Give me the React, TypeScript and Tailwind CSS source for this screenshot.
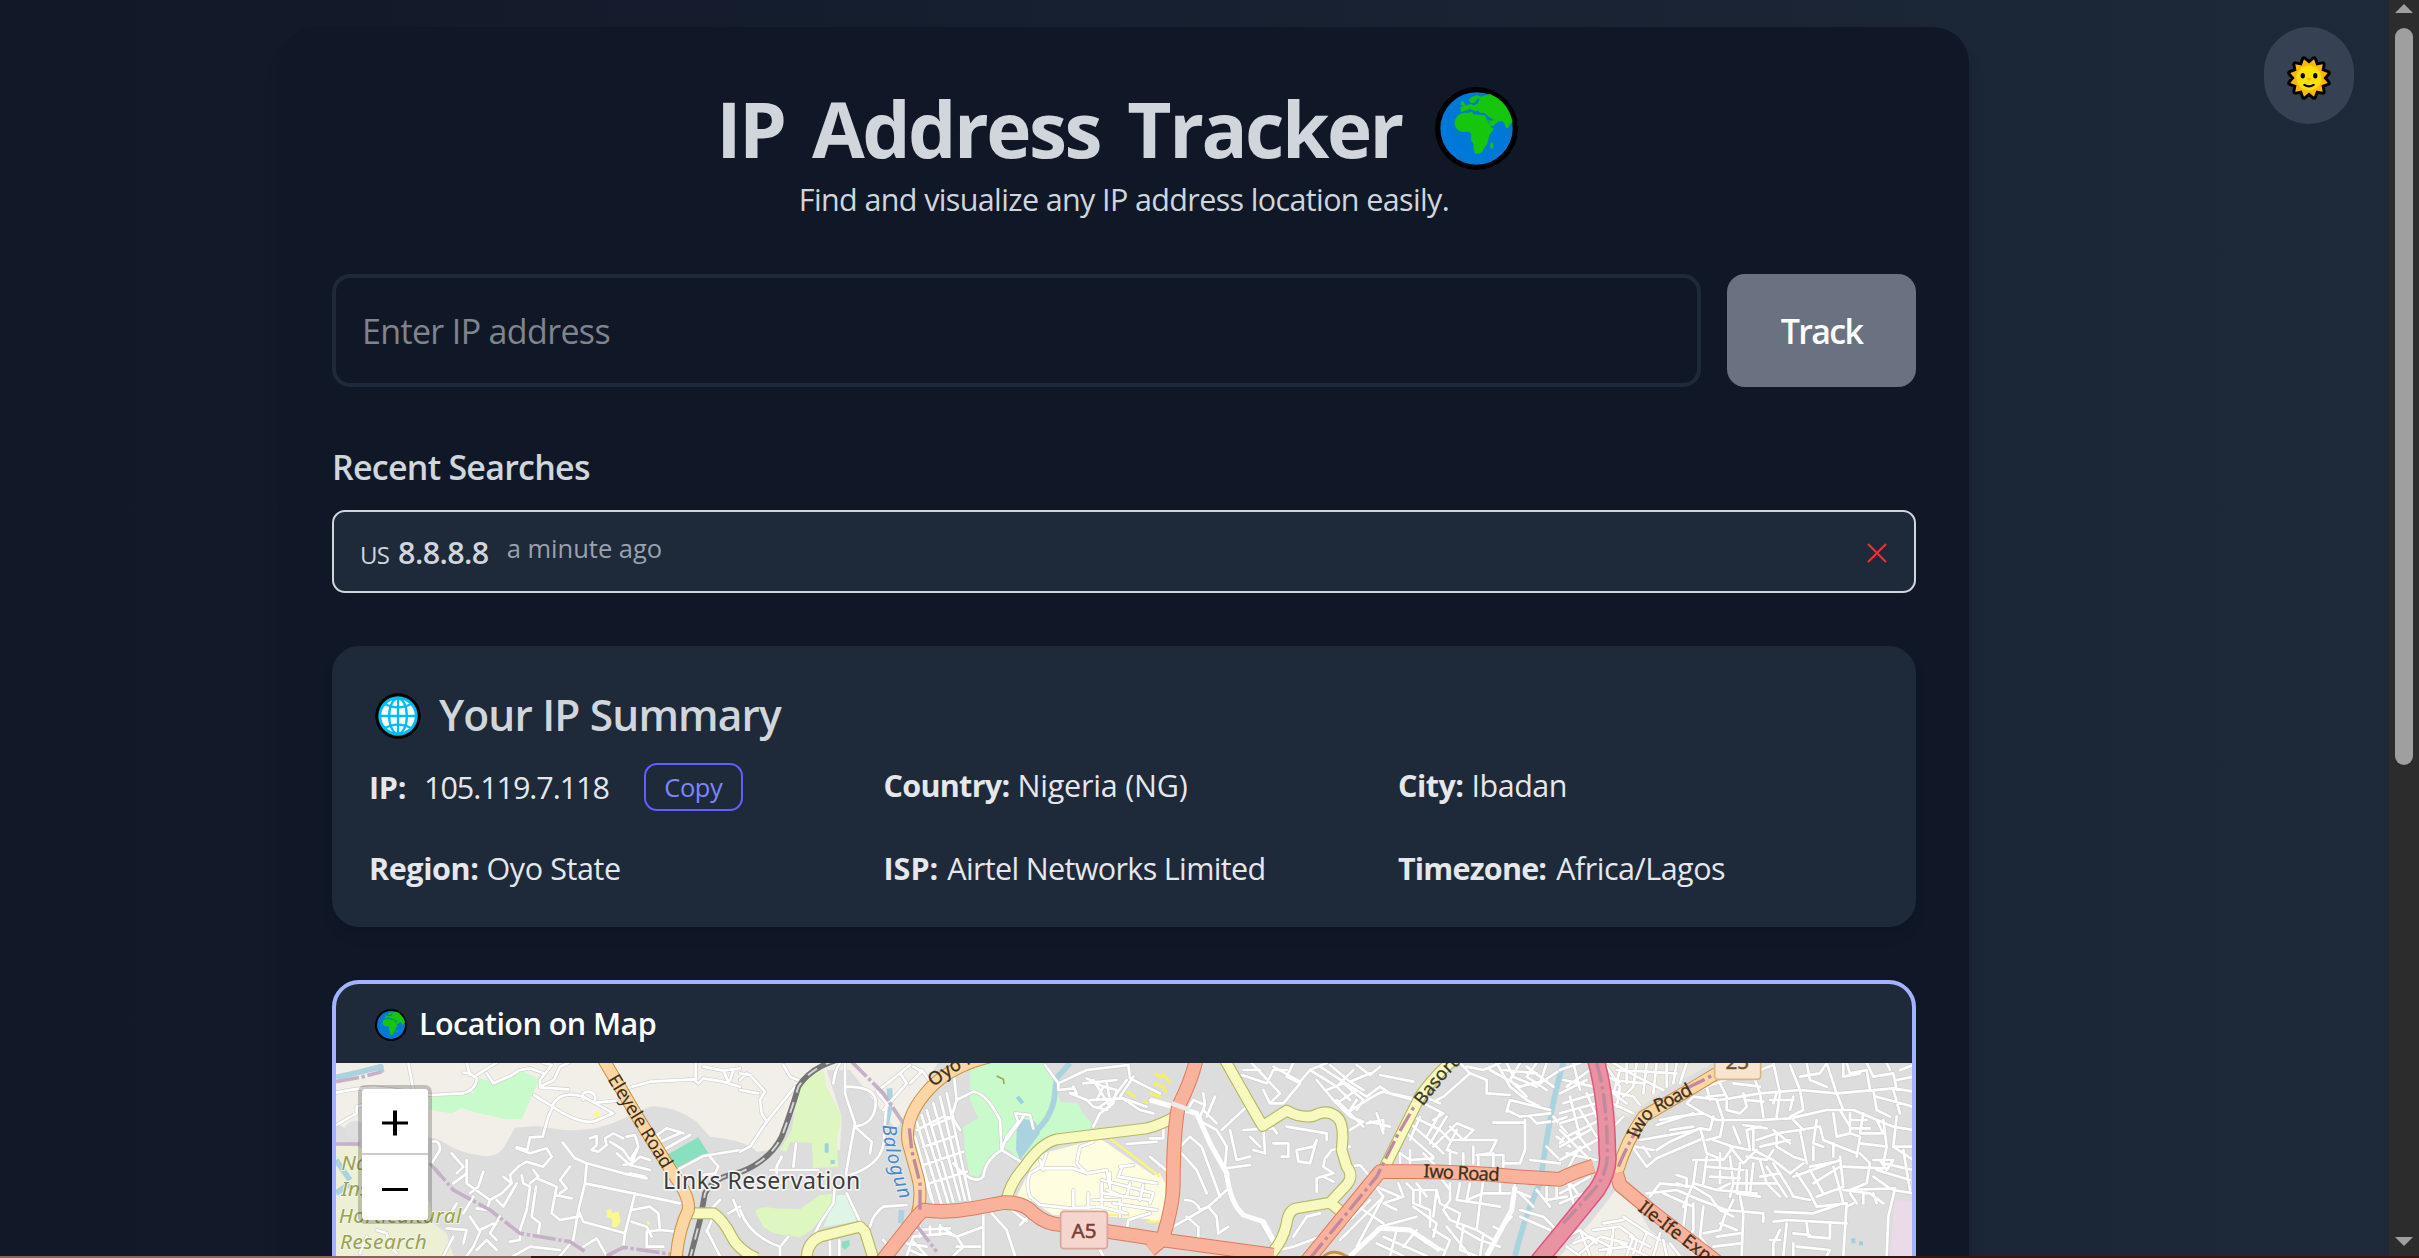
import React from "react";

/* ---------- icons ---------- */

function EarthIcon({ className }: { className: string }) {
  return (
    <svg viewBox="18 20 248 248" className={className} aria-hidden="true">
      <circle cx="142" cy="144" r="124" fill="#000" />
      <circle cx="142" cy="144" r="108" fill="#0078d7" />
      <g fill="#16c60c" stroke="#16c60c" strokeWidth="2" strokeLinejoin="round">
        <path d="M92 102Q102 96 118 98L128 95L133 103L150 104L167 106L177 126L187 143L193 145Q190 152 180 162L176 180L172 192Q164 200 158 214Q148 221 138 218Q133 205 134 190L127 180L126 159L120 153L98 153Q80 148 77 130Q78 112 92 102Z" />
        <path d="M182 42Q236 64 249 124L243 128L236 142L230 140L226 128L218 121L208 122L199 128L192 136L184 134L178 119L185 122L195 118L187 113L176 106L166 97L152 96L146 88L140 92L130 88L122 83L118 88L108 90L96 93L95 80L105 79L96 72L97 64L104 66L108 75L118 74L126 72L134 76L146 70L150 62L151 52L143 56L136 66L126 67L119 58L130 50L142 46L156 50L166 47Z" />
        <ellipse cx="188" cy="195" rx="4" ry="9" />
      </g>
    </svg>
  );
}

function MeridianIcon({ className }: { className: string }) {
  return (
    <svg viewBox="0 0 140 140" className={className} aria-hidden="true">
      <circle cx="70" cy="70" r="69" fill="#000" />
      <circle cx="70" cy="70" r="60" fill="#00bcf2" />
      <circle cx="70" cy="70" r="51" fill="#fff" />
      <g fill="none" stroke="#00bcf2" strokeWidth="7">
        <path d="M70 15V125M15 70H125" />
        <ellipse cx="70" cy="70" rx="27" ry="54" />
        <path d="M28 32Q70 56 112 32M28 108Q70 84 112 108" />
      </g>
    </svg>
  );
}

const sunPoints = Array.from({ length: 24 }, (_, i) => {
  const r = i % 2 === 0 ? 59 : 44;
  const a = ((i * 15 + 15) * Math.PI) / 180;
  return `${(70 + r * Math.sin(a)).toFixed(1)},${(70 - r * Math.cos(a)).toFixed(1)}`;
}).join(" ");

function SunIcon({ className }: { className: string }) {
  return (
    <svg viewBox="0 0 140 140" className={className} aria-hidden="true">
      <polygon points={sunPoints} fill="#000" stroke="#000" strokeWidth="18" strokeLinejoin="round" />
      <polygon points={sunPoints} fill="#ffb60f" />
      <circle cx="70" cy="70" r="38" fill="#ffe100" />
      <ellipse cx="51" cy="63" rx="6.5" ry="8.5" />
      <ellipse cx="89" cy="63" rx="6.5" ry="8.5" />
      <path d="M62 71Q70 68 78 71L73 78H67Z" fill="#ffb60f" />
      <path d="M56 91Q70 100 84 91" fill="none" stroke="#000" strokeWidth="7" strokeLinecap="round" />
    </svg>
  );
}

/* ---------- map ---------- */

/* Path data is grouped in four side-by-side sections, each 1230 units wide. */
type Sections = [string, string, string, string];

const streets: Sections = [
  "M18 128Q60 118 130 112L200 120L300 135L400 130Q440 118 440 85L420 70L400 68M410 39L420 75M440 75L480 50L500 39M470 70L490 100L540 78L570 60L600 55L640 70M640 39L665 45L630 90V112L715 118M630 110L672 90L690 50L715 39M612 135L668 170L655 200L638 260L600 262L592 300L560 292M668 165Q690 120 760 140L850 190L790 215Q740 220 668 170M760 150Q750 125 778 125Q800 130 795 150M800 158L860 152M890 115L960 95L1090 88L1105 100L1120 85L1180 95L1230 110M1097 39V90M1120 50L1180 62L1230 55M1180 62L1195 95M1210 60L1200 90M235 39L250 120M18 225L80 190V170L100 165" +
    "M310 275Q330 270 330 300L305 340L340 390M365 310L400 350L380 370M410 330V400L480 450M370 400L410 370M460 365L445 410L420 430M560 295L600 310L650 295L665 320L640 350L590 335L565 350L540 375L545 400L515 430L480 450L470 480L440 475M575 375L580 400L600 410L590 480L570 540V570L540 575M600 400L625 380L610 360M618 410L605 500L630 520L625 550M545 400L520 380M500 450L520 470L560 400M510 500L480 550L500 570M420 500L450 545L430 590L410 618M380 460L350 510M430 440L400 490M350 535L410 540L400 580M450 540L490 520M440 600L470 570L500 600" +
    "M698 278L735 325L770 340L765 400L745 480L730 570M770 340L880 370L950 385M720 350L690 390L710 415L690 430M620 385L680 410L675 435L725 445M675 435L665 490L690 510L745 500M765 400L910 430L1050 460M745 480L760 515L885 550L900 490L915 430M885 550L880 590M905 480L960 470L985 490L990 540L950 545V590L1000 590M990 540L1040 545M760 590L800 565L830 618M690 618L730 570M905 515L950 530L965 560M340 618L370 560M550 618L600 590L690 600" +
    "M780 265L800 258V285L785 300L805 305L830 285L825 265L850 250L880 265M840 275L880 300L900 330L925 290L915 255L890 260M925 290L905 340L880 345M860 310L900 345L960 360M900 345L930 320L960 330M900 370L945 380M960 240L990 265M965 265L1010 235L1060 250M980 280L1050 250M1000 300L1080 255M1045 358L1120 318L1230 300M1140 320L1165 350L1155 370L1120 375M1130 540L1170 618M1130 545L1150 500M1140 480L1170 450M1195 490L1230 470M1210 450L1230 500M140 540L170 550L180 590L200 610M90 610L110 560",
  "M0 70L30 75L75 125L60 150L65 190L80 215M0 120L55 130M0 305L30 290L80 215L165 110M130 45L150 80L185 95M0 90L20 70M280 100Q285 60 300 39M315 39V130L345 220L330 300L318 370L330 420M318 110Q400 110 407 150Q410 220 345 230M345 230L395 275L390 310M330 375Q440 340 432 250L440 160L410 125L480 70L510 45M480 70L500 100L430 180M520 50L545 65L510 100M545 60L575 100M90 360H235M168 280L160 350M125 320L110 350V370M85 390L130 400M285 400L280 460L240 520L220 560M320 430L365 525M390 530Q400 490 430 470L500 465M0 480Q30 560 120 590V618M125 585L145 560M270 570V618M298 570V618M430 570L445 590" +
    "M545 195L625 460M560 180L640 455M580 160L660 450M600 140L675 450M620 130L690 450M530 215L605 465M525 260L580 460M545 350L575 450M530 240L610 200L640 205M550 290L640 260M550 345L670 305M580 225L640 200M570 400L680 365M640 60L650 150L700 125Q740 130 780 210L785 300L850 340M650 150L635 200L660 240M785 300L800 260L835 215L825 190L870 195L880 235M785 300Q735 330 730 380Q700 410 640 340M800 270L850 200M915 45L955 100L1040 60L1165 45M955 100V120L1000 115M1165 45L1170 85L1260 130M1180 80L1140 140L1200 180L1240 190M1000 110L1010 130L990 130L1040 150L1060 170L1100 180L1130 130L1160 90M1040 85L1090 110L1070 150M1090 110L1130 120L1120 160L1080 190L1060 230M1030 100L1130 90M1050 150L1150 145L1220 170M1100 100L1110 150L1080 170M1060 90L1110 170M1160 282L1250 275M1230 320L1260 350" +
    "M920 310L905 350L870 370Q855 400 870 440L900 465L990 475L1080 470L1160 490M905 355H1000L1040 370L1100 360L1110 410M1040 370L1010 340L1020 290L1060 275M1140 350L1180 345M1145 355L1135 380L1250 400M1085 390L1240 430L1230 460M1090 430L1230 450M1110 370V420M1170 400L1160 440M1210 405L1200 450M1000 475V420M1045 430V475M1060 450H1140V500M1085 400V470M1100 420L1150 440M1120 460L1250 480M1160 540L1165 510L1230 490M910 360L900 330" +
    "M730 490V618M730 530L650 560L670 590L640 618M500 618L520 560L620 550L650 560M520 540L630 535M500 580L560 590M540 530V560M570 530V555M600 525V555M510 600L550 618M520 575L560 618M650 560L600 530M755 490L800 540L825 618M815 480L860 515M840 525L865 500M650 590H720M1090 618L1080 600",
  "M0 150L115 185M150 200L175 270L220 350L245 450L270 490L330 510L375 590M118 170L130 150L165 165L150 200M165 165L160 130M195 140L170 200M145 210L200 240L230 290L225 350M215 240L290 170M240 240L260 330L300 320M280 60L330 60M275 75L350 100L370 60L410 60M305 39L390 130L360 160M370 50L450 95L480 60L530 39M430 39L410 80L450 100L400 160L360 160L340 120M480 60L560 110L600 150M500 90L550 150L600 200L640 215L600 240M510 50L650 140L690 110M540 45L600 95L660 70M560 110L610 60M600 95L640 120M620 45L660 75L690 50M530 120L580 100L640 150L620 180M560 160L620 120M560 150L640 230M690 75L790 95M620 150L600 180M690 110L720 130L790 145M590 190Q680 130 700 125L790 150M650 220L700 210V240M680 190L700 250M660 215L720 230M90 290L120 260L155 290L210 440M95 310L140 360L170 430M280 240L370 235L380 250M340 230L345 310L310 300M300 260L330 290M370 280H415V320L395 320M445 335L440 300L490 290L500 270L480 340L450 335M410 230L530 250V270M530 320L545 300L600 290M525 325L520 350L550 370L500 385V425M520 380L550 395M600 350L630 345L660 380M0 320L60 370M105 450Q140 450 150 480L175 470L200 500L205 550L235 530M70 530L175 470L230 420M225 355L300 345M110 500L145 530V560M160 180L200 220M0 265H40V230M390 600L430 590L510 560M430 560L470 500L510 490M110 600H240L260 618" +
    "M930 39L960 70L880 140L860 150M960 70L1010 90L1010 130L1080 135M950 50L1000 60L1050 39M1040 39L1080 110L1130 150L1170 170M1070 39L1090 80L1160 110M1110 39L1080 90L1130 140M1160 39L1130 80L1190 120M1190 39L1170 100L1230 60M1060 60L1160 70M1020 60L1110 110L1190 90M1130 50L1210 110M1070 185L1080 150L1200 180M1070 180L1110 200L1200 190M1125 210V300L1110 340M1030 218H1125M1140 200L1160 220L1200 215M1210 200L1250 250L1230 280M1210 215L1250 200M1220 260L1260 290M1190 290L1230 330" +
    "M790 200L870 240L900 270M780 220L860 290L880 310M770 250L850 320M800 150L880 190L850 210M820 140L870 160M850 290L920 220L970 240L940 270L900 230M870 190L830 260M810 200L780 270M890 200L840 280M900 270H1040L1020 310L980 315M920 240L890 300L920 310M750 310L780 330L850 325M750 310V340M780 300V345M820 310L860 350M900 300V350M985 315H1060V340H1110M985 315V345M1030 310V350M940 310V345M970 340V290M1140 330L1230 340M1060 350V315" +
    "M660 390L700 440L570 570M680 410L750 440M700 440L620 590M745 400L760 440L700 460L740 480M660 450L590 520M640 480L700 520M680 540L600 618M680 540H780L830 580L880 600M690 530L800 500M770 400L790 420H860L870 460L930 490L920 530L990 570L1050 590M790 420V460L840 480V530M860 420L850 500M810 420V465M900 400V450L880 480L900 510L980 540M930 400L920 450L990 460L980 540L1030 570M960 400L950 450L1000 430L1080 430M1000 390L990 460L1050 470M1050 400V430M1095 400L1085 480L1010 618M1085 500L1050 540L1030 530M1110 480L1180 500L1220 540M1110 500L1200 540M1190 410V450L1250 440M1220 400V440M1160 420L1200 470M790 470L860 520L850 560M740 540L720 618M700 560L830 618M680 580L760 618M800 540L760 590M1090 420L1140 440M890 530L960 618M1110 430L1150 470M800 400L830 440M870 380L900 420M850 540L900 570L880 618M940 530L930 600L980 618M1000 550L990 618",
  "M0 60L60 39M20 110L90 60M10 90L100 110M0 130L80 90M40 39L60 120M10 160L110 130M0 190L110 160M0 220L100 190M20 260L120 210M0 290L90 240M30 140L60 260M60 180L110 260M0 330L110 270M10 380L60 290M20 310L110 330M0 240L90 330M50 250L90 300M80 130L110 200M0 430L90 380M30 400L60 440M0 460L70 430M20 380L40 460" +
    "M140 50L180 110L170 170M160 39L230 80L310 120M180 60L160 130L200 160M200 39V100M230 39L220 110L190 140M260 39L250 130M290 39L280 130M320 39V110M350 39L340 100M380 39L360 100M160 90L250 100M140 120L220 140L240 165M155 160L220 190M170 60L350 70M190 200L160 230M140 80L180 95" +
    "M300 210L350 200L430 190L470 210H600L690 205L800 180L880 180L1000 230L1060 240M290 225L400 190M330 240L400 230M210 280L260 350L290 325L430 265L420 235L330 275L290 300M225 290L280 300M240 270L300 260L410 240M270 320L250 290M430 190L380 160L400 140L480 150L600 130L720 120L830 130L1000 115L1060 125M400 130L440 110L520 80L600 60L640 45M440 110L450 150M470 150L490 210M500 140V180L540 190L560 170L550 130M520 100L600 110M580 75L600 130L610 200M640 39L660 130L650 200M690 45L720 120L730 180L690 200M740 39L750 90L800 110M720 80L780 70L800 39M800 39L830 130L850 180M850 39V80L900 70M860 39L870 70L920 60L930 120M920 39L940 80L1000 70L1010 120M980 39L990 60M1020 60L1060 45M1010 90L1060 80M480 100L500 140M440 140L490 135M560 150L610 155M630 150L700 150M700 140L690 180M650 130L640 160M940 120L950 180L990 200M950 140L1060 170M1000 120L1020 190M870 190V250L900 260L890 320M840 180L870 230M910 190L900 250L970 250L950 210M970 210L980 290M1010 200L1000 290L1060 330M870 210H920M870 235H930" +
    "M420 235L450 240L460 200M425 250L440 310L490 330L520 290L570 300L560 240L600 230M490 210L480 260L440 270M460 270L520 290M520 230L540 280M550 225L620 235M580 240L580 300L640 330M590 270L650 250L650 290L700 320L730 330M650 250L720 240L730 290L740 340M720 240L780 230L790 270L840 290L890 310M700 210L730 240M770 210L760 280L790 290M820 190L830 260L870 250M690 280L640 240M600 290L690 270M510 290L550 340L590 300M560 320L620 330L640 300M640 330L690 370L730 340M760 290V330M820 280L820 320M900 280L980 290L970 340L1060 360M940 330L1000 330L980 360L960 330M900 310L930 340L920 400L870 420M1000 290L1060 290M850 350L970 355M840 320L850 410L830 420M750 350L830 335M700 380L840 330M710 370L750 430L770 470M750 360L790 430M760 400L840 350M770 440L850 410M820 350L840 420L850 460" +
    "M400 330L480 330M410 330L400 400L370 470M400 400L470 420L510 400M440 320L430 400M480 310V400M510 320L520 400L510 440M440 350L550 360M450 380L540 385M540 340L530 430L600 440M560 360V430M580 340L570 430M600 330L620 400L660 440M620 350L680 440M640 340L690 420L700 440M520 400L650 400M470 420L590 430M600 380L660 370M350 375L380 385V410L350 400M270 440L300 400L400 410L450 440M260 430L350 420L420 450L500 480L610 490V515M310 430L400 470M380 450L370 530M400 460V540L380 580M430 470L420 560L450 600M450 440L480 480L520 500M500 480L480 540L430 550M540 440L550 490L545 618M480 520L530 540M470 560L540 550M460 590L540 580M520 450L500 490" +
    "M645 485L760 490L850 460M640 515L680 510L860 520M700 440L750 450M770 470L860 460L850 618M860 470L880 460M680 520L670 618M660 540L640 580V618M740 520L745 560L810 565V520M700 550L750 555M710 590L810 600L800 618M700 618V580M630 570H660M850 420L930 430L970 460M870 430L890 460M910 430V460M940 430L950 460M860 420L1000 415M1005 415L985 500L980 618M1000 420L1060 430M1030 300L1050 420M950 360L1050 390M940 380L990 415" +
    "M20 560L60 540L110 580M40 580L90 560L150 590L140 618M60 610L120 560L200 580M100 540L180 530L220 560L200 618M130 520L190 510M190 500L250 540L300 570M160 540L150 618M210 560L270 590M180 580L260 618M230 570L220 610M260 550L240 600M300 550L280 618M20 590L60 618M120 600L200 590M310 570L320 618M330 580L360 618M60 540L90 618",
];

const highlightAreas = [
  { d: "M300 143L430 128L448 85L475 92L490 100L568 58L627 88L605 140L575 208L525 207L440 188L395 175L365 190L300 180Z", fill: "#c8facc" },
  { d: "M18 285L90 290L300 455L310 520L350 550L370 618H18Z", fill: "#edf0d4" },
  { d: "M1010 315L1105 262L1135 310L1042 360Z", fill: "#88e0be" },
  { d: "M830 480L845 476V490L865 484L872 515L860 532L845 530L848 508L830 500Z M950 512L962 518L952 528Z M796 182L810 188L805 203L792 198Z", fill: "#fbf98a" },
  { d: "M1480 60L1420 90L1400 160L1385 240L1350 300L1370 305L1380 275L1445 278L1450 355L1525 350L1520 270L1535 200L1510 150L1490 110Z", fill: "#def6c0" },
  { d: "M1275 485Q1290 465 1330 475L1410 478L1470 435L1520 430L1500 470L1445 540L1410 562L1330 550L1300 530Z", fill: "#def6c0" },
  { d: "M1520 435H1555L1580 515L1480 530Z", fill: "#dff5e6" },
  { d: "M1535 575L1558 570L1560 585L1545 600L1535 590Z", fill: "#88e0be" },
  { d: "M1920 39H2140L2175 90L2190 155L2245 160L2255 185L2285 220L2280 240L2160 265L2110 300L2065 330L2040 300L2015 295L1975 325L1945 380L1920 375L1905 310L1900 230L1945 205L1920 150Z", fill: "#c8facc" },
  { d: "M2060 240L2075 205L2115 215L2130 250L2100 290L2070 330L2058 300Z", fill: "#aad3df" },
  { d: "M2140 310L2310 265L2490 390L2490 510L2340 500L2170 495L2110 455L2060 440L2110 340Z", fill: "#fffde0" },
  { d: "M2490 370L2505 400V510L2460 515L2460 380Z", fill: "#fffde0" },
  { d: "M3780 520L3865 410L3900 440L3960 540L4060 618H3690Z", fill: "#f2efe9" },
  { d: "M4695 450L4746 455V618H4680Z", fill: "#ebdbe8" },
];

const yellowRoads =
  "M1085 490H1150Q1180 510 1205 560Q1225 600 1280 625M1430 625Q1430 580 1470 560L1590 530L1605 545L1630 625" +
  "M2030 450Q2040 400 2080 355Q2130 280 2180 268L2450 235Q2490 225 2535 200" +
  "M2685 30L2770 180L2798 228L2870 182Q2910 205 2950 198Q2990 175 3020 200Q3045 220 3035 300L3050 350Q3075 380 3045 410L3000 458L2900 475Q2875 480 2870 520Q2860 570 2825 610M3000 458L3040 490M3160 360L3220 240L3270 140Q3310 80 3370 30";
const orangeRoads =
  "M815 20Q870 110 925 205L1035 380Q1080 440 1075 480Q1045 540 1038 630M1980 20Q1860 50 1800 115Q1720 200 1735 280L1760 370Q1780 430 1760 500M3860 370Q3890 270 3940 200L4060 130L4160 70";
const trunkRoads =
  "M1650 640L1760 500L1780 480Q1850 490 1930 475L2020 458Q2080 455 2110 490Q2150 525 2200 525Q2340 545 2500 570L2830 615M2600 20Q2590 80 2545 170Q2530 250 2530 400Q2530 460 2500 560M2460 600L2490 575M2925 640L3150 365H3240Q3400 365 3560 380L3690 388Q3720 370 3790 348M3860 370L3870 405L3960 480L4180 650";
const motorway = "M3795 20Q3830 140 3832 310Q3840 360 3800 420L3690 555L3620 640";
const rail = "M1520 30Q1440 55 1405 110Q1385 180 1355 260Q1320 330 1235 365Q1150 380 1125 430L1110 510L1080 625";
const rivers =
  "M18 82L90 66L152 50L155 68M1678 115Q1685 170 1665 230M2220 39L2180 85L2172 150Q2160 210 2110 250M1715 480L1712 520M2020 440L2045 390M3700 39Q3670 140 3655 240Q3640 330 3630 400Q3590 480 3555 618M18 330L60 390M18 430L60 400";
const boundaries =
  "M18 282H110M300 340L370 420L480 480L570 550L720 575L765 605M830 618L880 592L1060 618M1560 30L1660 130L1730 235H1740L1745 300L1770 400V470M1755 520L1820 605M18 95L100 80L155 65";
const roadBoundaries =
  "M1738 235L1745 300L1770 400V480M2940 625L3140 380L3200 260L3255 165M3800 39Q3830 140 3832 300Q3835 360 3800 410L3700 520M3865 350Q3890 290 3920 240M4070 115L4160 70";

function MapCanvas() {
  return (
    <svg viewBox="18 39 4728 579" preserveAspectRatio="none" className="block h-full w-full" aria-label="Street map of Ibadan">
      <defs>
        <path id="lblEleyele" d="M832 88L1004 368" />
        <path id="lblOyo" d="M1812 112Q1870 60 1990 10" />
        <path id="lblBalogun" d="M1658 225Q1665 330 1715 460" />
        <path id="lblBasorun" d="M3278 170L3350 80L3440 -10" />
        <path id="lblIwoA" d="M3280 382L3520 394" />
        <path id="lblIwoB" d="M3925 268Q3950 200 4000 180L4120 115" />
        <path id="lblIfe" d="M3922 480L4150 655" />
      </defs>
      <rect x="0" y="0" width="4760" height="640" fill="#dddddd" />
      <path d="M0 30H1830L1720 200L1700 240L1560 60H1490L1535 200L1530 300L1515 300V240L1400 180L1320 300L1280 305Q1250 270 1140 260L1100 215Q1030 165 960 170L870 210Q800 245 700 240L620 228L555 233L520 295Q500 322 460 318Q390 310 345 280Q310 250 200 270H100Q50 230 18 225H0Z" fill="#f2efe9" />
      <ellipse cx="76" cy="240" rx="32" ry="28" fill="#dfdfdf" />
      <path d="M3830 39H4150L4000 120L3900 200H3860Z" fill="#e9e6de" />
      <g>
        {highlightAreas.map((a) => (
          <path key={a.d} d={a.d} fill={a.fill} />
        ))}
      </g>
      <path d="M2000 78L2020 88L2022 102" fill="none" stroke="#a3a35a" strokeWidth="5" />
      <path d="M2400 78L2425 98M2390 125L2415 140M2440 155L2455 160M2475 70L2490 80L2500 75L2520 95M2470 100L2500 110L2510 128M2460 130L2495 142" fill="none" stroke="#f5f05c" strokeWidth="9" />
      <path d="M2320 495H2400M2450 515H2490M2340 265L2490 380" fill="none" stroke="#faf47a" strokeWidth="7" />
      <g fill="none" strokeLinejoin="round">
        <path d={rivers} stroke="#aad3df" strokeWidth="17" />
        <path d="M2062 140L2078 160M1490 280V308M1508 330V342M4570 565V580M4593 574V586" stroke="#9fd0df" strokeWidth="12" />
        {streets.map((d, i) => (
          <g key={i} transform={`translate(${i * 1230} 0)`} strokeLinecap="round">
            <path d={d} stroke="#cfcfcf" strokeWidth="12" />
            <path d={d} stroke="#ffffff" strokeWidth="8" />
          </g>
        ))}
        <path d="M2460 150L2600 190L2640 280L2690 370Q2700 460 2740 495L2800 515L2840 590M3555 410L3545 480L3470 618M3060 618L3150 535L3240 540L3330 600" stroke="#fff" strokeWidth="15" />
        <path d={boundaries} stroke="#c6b0c8" strokeWidth="11" strokeDasharray="70 8 10 8" />
        <path d={rail} stroke="#747474" strokeWidth="17" />
        <path d={rail} stroke="#d4d4d4" strokeWidth="6" strokeDasharray="34 30" />
        <path d={yellowRoads} stroke="#b5b866" strokeWidth="36" />
        <path d={yellowRoads} stroke="#f7f9bf" strokeWidth="29" />
        <path d={orangeRoads} stroke="#c79242" strokeWidth="39" />
        <path d={orangeRoads} stroke="#fcd6a4" strokeWidth="33" />
        <path d={trunkRoads} stroke="#dd7a5c" strokeWidth="44" />
        <path d={trunkRoads} stroke="#f9b29c" strokeWidth="38" />
        <path d={motorway} stroke="#e0567f" strokeWidth="54" />
        <path d={motorway} stroke="#e892a2" strokeWidth="45" />
        <path d={roadBoundaries} stroke="#c08a9e" strokeWidth="10" strokeDasharray="60 12 10 12" />
        <path d="M2525 160L2580 180" stroke="#ececec" strokeWidth="14" />
        <path d="M2980 620Q3010 590 3060 625" stroke="#c79242" strokeWidth="8" fill="#fcd6a4" />
      </g>

      <g fontFamily="'Noto Sans', 'Open Sans', sans-serif" fontSize="55" fill="#3c3018" stroke="#3c3018" strokeWidth="0.8">
        <text stroke="none"><textPath href="#lblEleyele" textLength="318">Eleyele Road</textPath></text>
        <text><textPath href="#lblOyo">Oyo Road</textPath></text>
        <text fill="#3a3a2c"><textPath href="#lblBasorun">Basorun</textPath></text>
        <text><textPath href="#lblIwoA" textLength="228">Iwo Road</textPath></text>
        <text><textPath href="#lblIwoB" textLength="222">Iwo Road</textPath></text>
        <text><textPath href="#lblIfe">Ile-Ife Expressway</textPath></text>
      </g>
      <g fontFamily="'Noto Sans', 'Open Sans', sans-serif" paintOrder="stroke" strokeLinejoin="round">
        <text fontSize="58" fontStyle="italic" fill="#4d88c4" stroke="#e6ebef" strokeWidth="6"><textPath href="#lblBalogun" textLength="232">Balogun</textPath></text>
        <text x="999" y="418" fontSize="69" fill="#3c3c3c" stroke="#f4f4f2" strokeWidth="10" textLength="592">Links Reservation</text>
        <g fontSize="62" fontStyle="italic" fill="#98a24c" stroke="#f3f4e4" strokeWidth="6">
          <text x="34" y="360">National</text>
          <text x="34" y="439">Institute</text>
          <text x="26" y="518" textLength="368">Horticultural</text>
          <text x="30" y="597" textLength="260">Research</text>
        </g>
      </g>
      <rect x="2192" y="484" width="140" height="112" rx="10" fill="#f4d6ce" stroke="#d9a59a" strokeWidth="5" />
      <text x="2262" y="563" textAnchor="middle" fontFamily="'Noto Sans', sans-serif" fontSize="62" fill="#7c3c33" stroke="#7c3c33" strokeWidth="1.5">A5</text>
      <rect x="4154" y="-20" width="138" height="108" rx="10" fill="#f7e5cf" stroke="#dcb587" strokeWidth="5" />
      <text x="4222" y="57" textAnchor="middle" fontFamily="'Noto Sans', sans-serif" fontSize="62" fill="#6d5434" stroke="#6d5434" strokeWidth="1.5">25</text>
    </svg>
  );
}

function ZoomControl() {
  return (
    <div className="absolute left-[22px] top-[22px] flex h-[139px] w-[74px] flex-col rounded-[7px] border-4 border-black/20">
      <button aria-label="Zoom in" className="flex h-[66px] items-center justify-center rounded-t-[4px] border-b-2 border-[#ccc] bg-white pt-[3px]">
        <svg viewBox="0 0 26 26" className="size-[26px]">
          <path d="M0 13H26" stroke="#000" strokeWidth="3" />
          <path d="M13 .5V25.5" stroke="#000" strokeWidth="4" />
        </svg>
      </button>
      <button aria-label="Zoom out" className="flex flex-1 items-center justify-center rounded-b-[4px] bg-white">
        <svg viewBox="0 0 26 26" className="size-[26px]">
          <path d="M0 14.5H26" stroke="#000" strokeWidth="3" />
        </svg>
      </button>
    </div>
  );
}

/* ---------- page ---------- */

export default function App() {
  return (
    <div className="relative flex h-[1258px] w-[2419px] flex-col overflow-hidden bg-[#2c2c2c] font-['Open_Sans','Noto_Sans',sans-serif]">
      <div className="flex h-[1256px]">
        <main className="relative h-full w-[2389px] overflow-hidden bg-linear-to-r from-gray-900 to-gray-800 pl-[280px] pt-[27px]">
          <section className="h-[1400px] w-[1689px] rounded-[36px] bg-gray-900 pl-[52px] pr-[53px] pt-[52px] text-gray-300 shadow-xl">
            <header>
              <h1 className="mr-[14px] flex h-[94px] items-center justify-center pt-1 text-[76.5px] font-bold leading-[94px] tracking-[-2.5px] [word-spacing:10px]">
                IP Address Tracker
                <EarthIcon className="ml-[33px] size-[83px]" />
              </h1>
              <p className="text-center text-[30.5px] leading-[52px] tracking-[-0.63px]">Find and visualize any IP address location easily.</p>
            </header>

            <form className="mt-[49px] flex h-[113px] gap-[26px]">
              <div className="flex flex-1 items-center rounded-[18px] border-4 border-gray-800 px-[26px] pt-[2px] text-[34px] tracking-[-0.65px] text-[#80848c]">
                Enter IP address
              </div>
              <button type="button" className="w-[189px] rounded-[18px] bg-gray-500 pt-[2px] text-[34px] font-semibold tracking-[-1.7px] text-white">Track</button>
            </form>

            <h2 className="mt-[54px] text-[34px] font-semibold leading-[52px] tracking-[-0.75px]">Recent Searches</h2>
            <div className="mt-[17px] flex h-[83px] items-center justify-between rounded-[13px] border-2 border-gray-300 bg-gray-800 pl-[26px] pr-[27px]">
              <div className="flex items-baseline pt-[2px]">
                <span className="text-[24px] tracking-[-0.8px]">US</span>
                <span className="ml-[9px] text-[30.5px] font-semibold tracking-[-0.6px]">8.8.8.8</span>
                <span className="ml-[18px] -translate-y-1.5 text-[25.5px] text-gray-400">a minute ago</span>
              </div>
              <button aria-label="Remove" className="pt-[2px]">
                <svg viewBox="0 0 20 20" className="size-5">
                  <path d="M1 1L19 19M19 1L1 19" stroke="#fb2c36" strokeWidth="2" />
                </svg>
              </button>
            </div>

            <section className="mt-[53px] h-[281px] rounded-[27px] bg-gray-800 px-[37px] pt-[43px] shadow-lg">
              <h2 className="flex h-[51px] items-center text-[42.5px] font-semibold leading-[51px] tracking-[-0.86px]">
                <MeridianIcon className="ml-[6px] mr-[18px] mt-[2px] size-[46px]" />
                Your IP Summary
              </h2>
              <div className="mt-[23px] grid grid-cols-[repeat(3,514.5px)] items-start gap-y-[35px] text-[30.5px] leading-[44px] text-gray-200">
                <p className="flex h-12 items-center">
                  <b className="tracking-[-0.3px]">IP:</b>
                  <span className="ml-[18px] tracking-[-1.05px]">105.119.7.118</span>
                  <button className="ml-[35px] h-12 w-[99px] rounded-[13px] border-2 border-[#615fff] text-[25.5px] leading-[40px] tracking-[-0.4px] text-[#7c86ff]">Copy</button>
                </p>
                <p className="flex gap-[8px]"><b className="tracking-[-0.7px]">Country:</b><span className="tracking-[-0.2px]">Nigeria (NG)</span></p>
                <p className="flex gap-[8px]"><b className="tracking-[-0.5px]">City:</b><span className="tracking-[-0.5px]">Ibadan</span></p>
                <p className="flex gap-[8px]"><b className="tracking-[-0.4px]">Region:</b><span className="tracking-[-0.4px]">Oyo State</span></p>
                <p className="flex gap-[9px]"><b>ISP:</b><span className="tracking-[-0.65px]">Airtel Networks Limited</span></p>
                <p className="flex gap-[10px]"><b className="tracking-[-0.8px]">Timezone:</b><span className="tracking-[-0.5px]">Africa/Lagos</span></p>
              </div>
            </section>

            <section className="mt-[53px] h-[400px] overflow-hidden rounded-[27px] border-4 border-indigo-300 bg-gray-800">
              <h3 className="flex h-[79px] items-center pl-[39px] text-[30.5px] font-semibold tracking-[-0.54px] text-white">
                <EarthIcon className="mr-3 mt-[2px] size-[32px]" />
                Location on Map
              </h3>
              <div className="relative h-[193px] w-full">
                <MapCanvas />
                <ZoomControl />
              </div>
            </section>
          </section>

          <button aria-label="Toggle theme" className="absolute right-[35px] top-[27px] flex h-[97px] w-[90px] items-center justify-center rounded-full bg-gray-700 pt-[5px]">
            <SunIcon className="size-[46px]" />
          </button>
        </main>

        <aside className="flex h-full w-[30px] flex-col items-center justify-between pb-[10px] pt-1">
          <svg viewBox="0 0 18 9" className="h-[9px] w-[18px]"><path d="M9 0L18 9H0Z" fill="#9f9f9f" /></svg>
          <div className="mb-auto mt-[15px] h-[737px] w-[18px] rounded-full bg-[#9f9f9f]" />
          <svg viewBox="0 0 18 9" className="h-[9px] w-[18px]"><path d="M0 0H18L9 9Z" fill="#9f9f9f" /></svg>
        </aside>
      </div>
      <div className="flex h-[2px] bg-[#3a150c]">
        <div className="w-[531px] bg-[#8b6357]" />
        <div className="ml-[1026px] w-[75px] bg-[#7a3519]" />
      </div>
    </div>
  );
}
